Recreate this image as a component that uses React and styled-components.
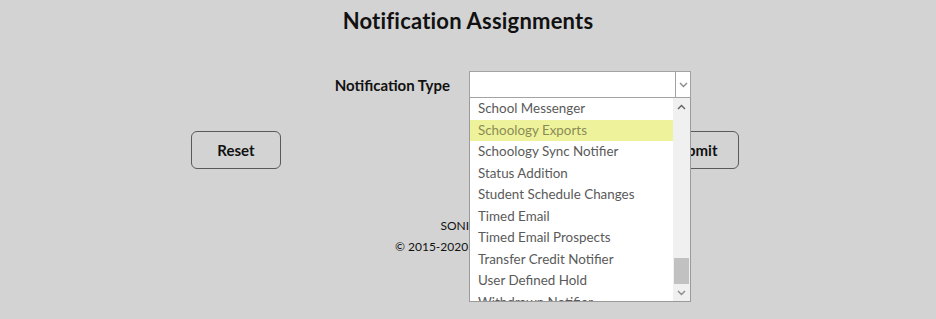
import React from 'react';
import styled, { createGlobalStyle } from 'styled-components';

const GlobalStyle = createGlobalStyle`
  html, body {
    margin: 0;
    padding: 0;
    background: #d3d3d3;
    font-family: Lato, "Liberation Sans", sans-serif;
    color: #111;
  }
`;

const Page = styled.div`
  width: 936px;
  height: 319px;
  overflow: hidden;
  display: flex;
  flex-direction: column;
  align-items: center;
`;

const Title = styled.h1`
  margin: 8px 0 0;
  font-size: 22px;
  font-weight: 700;
  line-height: 26px;
  letter-spacing: 0.2px;
`;

const FormRow = styled.div`
  display: grid;
  grid-template-columns: 469px 222px;
  align-items: center;
  width: 936px;
  margin-top: 37px;
`;

const Label = styled.label`
  justify-self: end;
  padding-right: 19px;
  font-size: 15px;
  font-weight: 700;
`;

const SelectWrap = styled.div`
  position: relative;
`;

const SelectBox = styled.div`
  height: 25px;
  background: #fff;
  border: 1px solid #a3a3a3;
  display: flex;
  justify-content: flex-end;
`;

const SelectArrow = styled.div`
  width: 14px;
  border-left: 1px solid #a3a3a3;
  display: flex;
  align-items: center;
  justify-content: center;
`;

const Dropdown = styled.div`
  position: absolute;
  top: 100%;
  left: 0;
  width: 222px;
  height: 204px;
  box-sizing: border-box;
  background: #fff;
  border: 1px solid #9a9a9a;
  border-top: none;
  display: flex;
  z-index: 5;
`;

const Options = styled.ul`
  flex: 1;
  margin: 0;
  padding: 0;
  list-style: none;
  overflow: hidden;
`;

const Option = styled.li`
  height: 21.5px;
  line-height: 20px;
  padding-left: 8px;
  font-size: 13.4px;
  white-space: nowrap;
  color: ${p => (p.$active ? '#8b8b56' : '#5a5a5a')};
  background: ${p => (p.$active ? '#eef39b' : 'transparent')};
`;

const Scrollbar = styled.div`
  width: 17px;
  background: #f0f0f0;
  display: flex;
  flex-direction: column;
`;

const ScrollButton = styled.div`
  height: 17px;
  display: flex;
  align-items: center;
  justify-content: center;
`;

const Track = styled.div`
  flex: 1;
  display: flex;
  flex-direction: column;
  justify-content: flex-end;
  padding: 0 1px;
`;

const Thumb = styled.div`
  height: 26px;
  background: #c1c1c1;
`;

const ButtonRow = styled.div`
  display: flex;
  gap: 368px;
  margin-top: 33px;
  padding-right: 6px;
`;

const Button = styled.button`
  width: 90px;
  height: 38px;
  background: transparent;
  border: 1px solid #5a5a5a;
  border-radius: 6px;
  font-family: inherit;
  font-size: 15px;
  font-weight: 700;
  color: #111;
`;

const Footer = styled.div`
  margin-top: 46px;
  text-align: center;
  font-size: 12px;
  line-height: 21px;
  color: #111;
`;

const Chevron = ({ up }) => (
  <svg width="9" height="6" viewBox="0 0 9 6">
    <path
      d={up ? 'M1 5 L4.5 1.5 L8 5' : 'M1 1 L4.5 4.5 L8 1'}
      fill="none"
      stroke={up ? '#606060' : '#8a8a8a'}
      strokeWidth="1.4"
    />
  </svg>
);

const items = [
  'School Messenger',
  'Schoology Exports',
  'Schoology Sync Notifier',
  'Status Addition',
  'Student Schedule Changes',
  'Timed Email',
  'Timed Email Prospects',
  'Transfer Credit Notifier',
  'User Defined Hold',
  'Withdrawn Notifier',
];

export default function App() {
  return (
    <>
      <GlobalStyle />
      <Page>
        <Title>Notification Assignments</Title>
        <FormRow>
          <Label>Notification Type</Label>
          <SelectWrap>
            <SelectBox>
              <SelectArrow>
                <Chevron />
              </SelectArrow>
            </SelectBox>
            <Dropdown>
              <Options>
                {items.map(item => (
                  <Option key={item} $active={item === 'Schoology Exports'}>
                    {item}
                  </Option>
                ))}
              </Options>
              <Scrollbar>
                <ScrollButton>
                  <Chevron up />
                </ScrollButton>
                <Track>
                  <Thumb />
                </Track>
                <ScrollButton>
                  <Chevron />
                </ScrollButton>
              </Scrollbar>
            </Dropdown>
          </SelectWrap>
        </FormRow>
        <ButtonRow>
          <Button>Reset</Button>
          <Button>Submit</Button>
        </ButtonRow>
        <Footer>
          <div>SONIS 4.2</div>
          <div>© 2015-2020 Jenzabar, Inc.</div>
        </Footer>
      </Page>
    </>
  );
}
